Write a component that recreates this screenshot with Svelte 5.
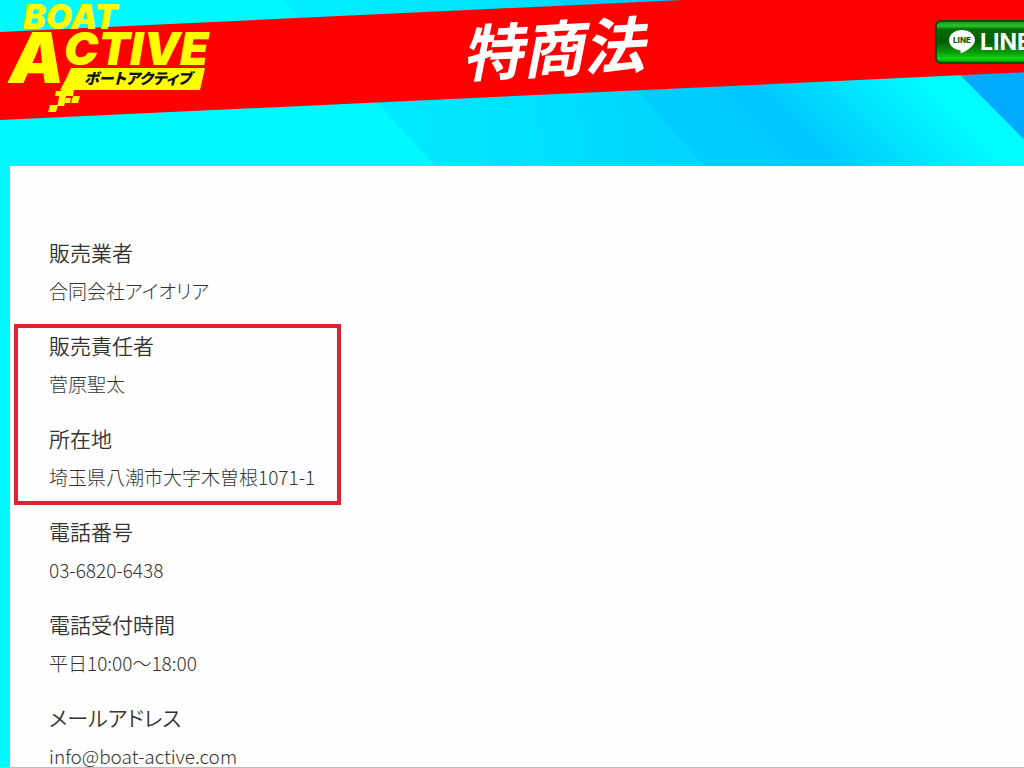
<script>
  const seller = [
    { label: '販売業者', value: '合同会社アイオリア' }
  ];

  const responsible = [
    { label: '販売責任者', value: '菅原聖太' },
    { label: '所在地', value: '埼玉県八潮市大字木曽根1071-1' }
  ];

  const contact = [
    { label: '電話番号', value: '03-6820-6438' },
    { label: '電話受付時間', value: '平日10:00〜18:00' },
    { label: 'メールアドレス', value: 'info@boat-active.com' }
  ];

  const sections = [
    { items: seller, marked: false },
    { items: responsible, marked: true },
    { items: contact, marked: false }
  ];
</script>

<div class="page">
  <header>
    <!-- Background shapes and the slanted red band -->
    <svg class="backdrop" viewBox="0 0 1116 166" preserveAspectRatio="none" aria-hidden="true">
      <defs>
        <linearGradient id="mid" gradientUnits="userSpaceOnUse" x1="370" y1="120" x2="660" y2="90">
          <stop offset="0" stop-color="#00ecff" />
          <stop offset="1" stop-color="#00d6ff" />
        </linearGradient>
        <linearGradient id="deep" gradientUnits="userSpaceOnUse" x1="740" y1="130" x2="877" y2="-7">
          <stop offset="0" stop-color="#00ccff" />
          <stop offset="0.2" stop-color="#00c6ff" />
          <stop offset="0.85" stop-color="#00fcff" />
        </linearGradient>
      </defs>
      <rect width="1116" height="166" fill="#00f9ff" />
      <path d="M283 0H1116V166H435L377 103Z" fill="url(#mid)" />
      <path d="M558 0H1116V166H704L637 90Z" fill="url(#deep)" />
      <path d="M884 0H1116V232L961 76Z" fill="#00aaff" />
      <path d="M0 32L683 0H1116V68L0 120Z" fill="#ff0000" />
    </svg>

    <a class="logo" href="/" aria-label="BOAT ACTIVE ボートアクティブ">
      <svg viewBox="0 0 216 116" width="216" height="116">
        <g fill="#ffff00" class="logo-text">
          <text x="23" y="29" font-size="34">BOAT</text>
          <text x="9" y="83" font-size="70">A</text>
          <text x="64" y="65" font-size="46">CTIVE</text>
          <path d="M71 68H205L200 90H60L66 79Z" />
          <path d="M62 89H74L73 96H66L65 103H58L59 96H55L56 91H61ZM73 96H80L78 103H71ZM66 98H71L70 103H65ZM58 103H65L64 106H57ZM50 105H58L56 112H48Z" />
        </g>
        <text class="logo-kana" x="84" y="84" font-size="15">ボートアクティブ</text>
      </svg>
    </a>

    <h1>特商法</h1>

    <button class="line-btn" type="button">
      <svg viewBox="0 0 26 24" width="26" height="24" aria-hidden="true">
        <path d="M13 0C5.800 0 0 4.600 0 10.300C0 15.300 4.500 19.300 10.600 20.300C12 20.600 11.700 21.600 11.400 23.600C15.500 22 26 16.500 26 10.300C26 4.600 20.200 0 13 0Z" fill="#fff" />
        <text x="13" y="13" text-anchor="middle" font-size="8">LINE</text>
      </svg>
      <span>LINE</span>
    </button>
  </header>

  <main>
    {#each sections as section}
      <dl class:marked={section.marked}>
        {#each section.items as item}
          <div class="entry">
            <dt>{item.label}</dt>
            <dd>{item.value}</dd>
          </div>
        {/each}
      </dl>
    {/each}
  </main>
</div>

<style>
  :global(body) {
    margin: 0;
    background: #00f9ff;
    font-family: "Noto Sans CJK JP", sans-serif;
  }

  .page {
    height: 100vh;
    overflow: hidden;
    box-sizing: border-box;
    border-bottom: 1px solid #bbb;
  }

  /* Header */
  header {
    position: relative;
    display: grid;
    grid-template-columns: 1fr auto 1fr;
    align-items: start;
    min-width: 1116px;
    height: 166px;
    box-sizing: border-box;
    padding-right: 10px;
  }

  .backdrop {
    position: absolute;
    inset: 0;
    width: 100%;
    height: 100%;
    z-index: -1;
  }

  .logo svg { display: block; }

  .logo-text {
    font-family: Inter, "Liberation Sans", sans-serif;
    font-weight: 900;
    font-style: italic;
  }

  .logo-kana {
    font-family: "Noto Sans CJK JP", sans-serif;
    font-weight: 900;
    font-style: italic;
    font-feature-settings: "palt";
    fill: #111;
  }

  h1 {
    margin: 0;
    color: #fff;
    font-size: 61px;
    font-weight: 700;
    font-style: italic;
    line-height: 92px;
    transform: rotate(-3deg);
  }

  .line-btn {
    justify-self: end;
    display: flex;
    align-items: center;
    gap: 5px;
    width: 171px;
    height: 44px;
    margin-top: 20px;
    padding: 0 12px;
    border: 2px solid #064f06;
    border-radius: 6px;
    background: linear-gradient(#10a010 0, #2fc02f 10%, #067006 18%, #045c04 50%, #089808 75%, #12d812 92%, #0a8a0a 100%);
    color: #fff;
    font-family: Inter, "Liberation Sans", sans-serif;
    font-size: 23px;
    font-weight: 700;
    cursor: pointer;
  }

  .line-btn text { fill: #075d07; font-weight: 800; }

  /* Legal information */
  main {
    min-height: 100vh;
    margin-left: 10px;
    padding: 68px 39px;
    box-sizing: border-box;
    background: #fefefe;
  }

  dl {
    position: relative;
    width: fit-content;
    margin: 0;
    color: #333;
    font-weight: 300;
    font-feature-settings: "palt";
  }

  .entry { padding-bottom: 17px; }

  dt {
    font-size: 21px;
    font-weight: 350;
    line-height: 37px;
  }

  dd {
    margin: 0;
    font-size: 19px;
    line-height: 39px;
  }

  .marked::before {
    content: "";
    position: absolute;
    inset: -3px -26px 8px -35px;
    border: 4px solid #db2530;
  }
</style>
